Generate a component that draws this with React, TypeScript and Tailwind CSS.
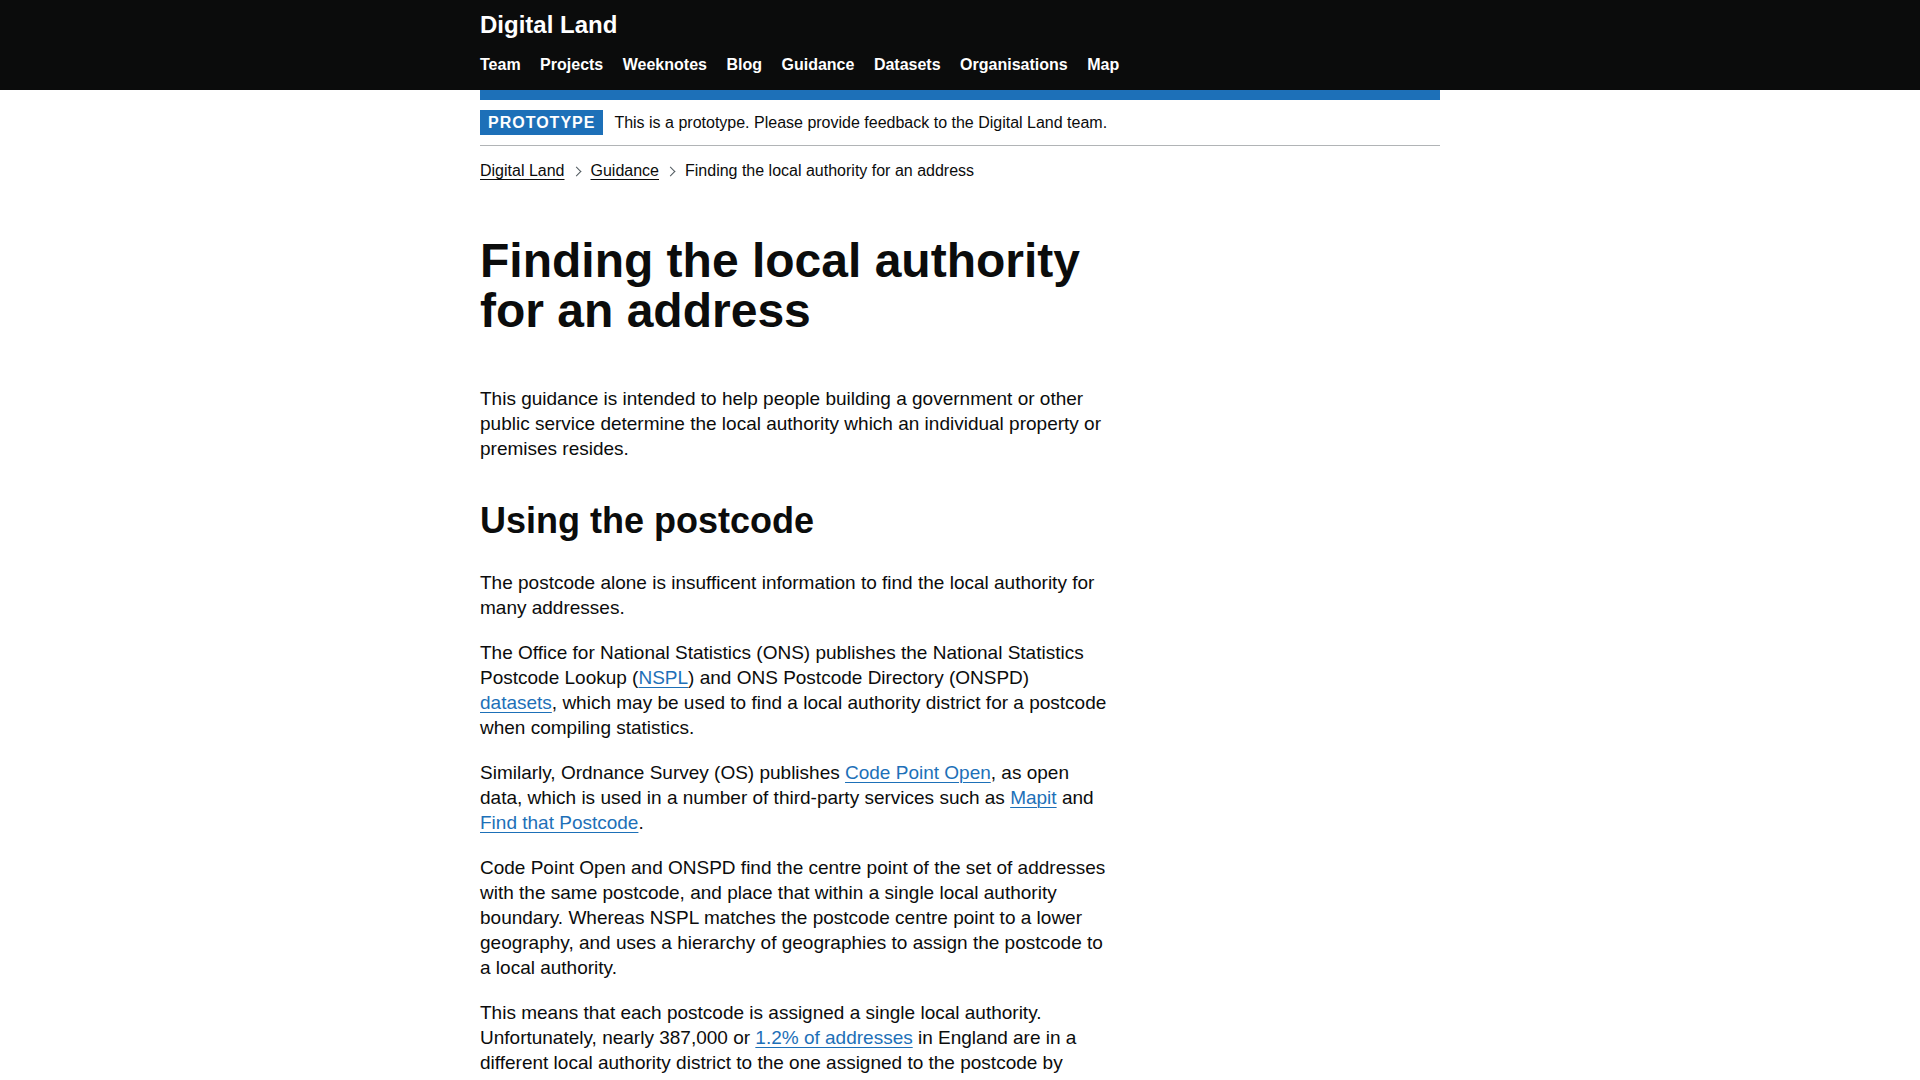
import React from "react";

const navItems = [
  "Team",
  "Projects",
  "Weeknotes",
  "Blog",
  "Guidance",
  "Datasets",
  "Organisations",
  "Map",
];

const Link = ({ children }: { children: React.ReactNode }) => (
  <a
    href="#"
    className="text-[#1d70b8] underline decoration-1 underline-offset-[0.1578em]"
  >
    {children}
  </a>
);

const Chevron = () => (
  <span className="ml-[8px] mr-[11px] inline-block h-[7px] w-[7px] rotate-45 border-t border-r border-[#505a5f]" />
);

const App = () => {
  return (
    <div className="min-h-screen bg-white font-['Liberation_Sans',Arial,sans-serif] text-[#0b0c0c]">
      {/* header */}
      <header className="bg-[#0b0c0c] text-white">
        <div className="mx-auto h-[90px] w-[960px] pt-[10px]">
          <a href="#" className="block text-[24px] font-bold leading-[30px]">
            Digital Land
          </a>
          <nav className="mt-[12px] flex gap-[19.5px] text-[16px] font-bold leading-[25px]">
            {navItems.map((item) => (
              <a key={item} href="#">
                {item}
              </a>
            ))}
          </nav>
        </div>
      </header>
      <div className="mx-auto h-[10px] w-[960px] bg-[#1d70b8]" />

      <div className="mx-auto w-[960px]">
        {/* phase banner */}
        <div className="flex items-center border-b border-[#b1b4b6] pt-[10px] pb-[10px]">
          <strong className="mr-[11px] bg-[#1d70b8] px-[8px] pt-[5px] pb-[4px] text-[16px] font-bold uppercase leading-[16px] tracking-[1px] text-white">
            Prototype
          </strong>
          <span className="text-[16px] leading-[20px]">
            This is a prototype. Please provide feedback to the Digital Land
            team.
          </span>
        </div>

        {/* breadcrumbs */}
        <ol className="mt-[15px] mb-[15px] flex items-center text-[16px] leading-[20px]">
          <li className="flex items-center">
            <a href="#" className="underline decoration-1 underline-offset-[0.1578em]">
              Digital Land
            </a>
            <Chevron />
          </li>
          <li className="flex items-center">
            <a href="#" className="underline decoration-1 underline-offset-[0.1578em]">
              Guidance
            </a>
            <Chevron />
          </li>
          <li>Finding the local authority for an address</li>
        </ol>

        <main className="pt-[40px] pb-[60px]">
          <div className="w-[628px]">
            <h1 className="mb-[50px] text-[48px] font-bold leading-[50px]">
              Finding the local authority for an address
            </h1>

            <p className="mb-[20px] text-[19px] leading-[25px]">
              This guidance is intended to help people building a government or
              other public service determine the local authority which an
              individual property or premises resides.
            </p>

            <h2 className="mb-[29px] pt-[20px] text-[36px] font-bold leading-[40px]">
              Using the postcode
            </h2>

            <p className="mb-[20px] text-[19px] leading-[25px]">
              The postcode alone is insufficent information to find the local
              authority for many addresses.
            </p>

            <p className="mb-[20px] text-[19px] leading-[25px]">
              The Office for National Statistics (ONS) publishes the National
              Statistics Postcode Lookup (<Link>NSPL</Link>) and ONS Postcode
              Directory (ONSPD) <Link>datasets</Link>, which may be used to find
              a local authority district for a postcode when compiling
              statistics.
            </p>

            <p className="mb-[20px] text-[19px] leading-[25px]">
              Similarly, Ordnance Survey (OS) publishes{" "}
              <Link>Code Point Open</Link>, as open data, which is used in a
              number of third-party services such as <Link>Mapit</Link> and{" "}
              <Link>Find that Postcode</Link>.
            </p>

            <p className="mb-[20px] text-[19px] leading-[25px]">
              Code Point Open and ONSPD find the centre point of the set of
              addresses with the same postcode, and place that within a single
              local authority boundary. Whereas NSPL matches the postcode centre
              point to a lower geography, and uses a hierarchy of geographies to
              assign the postcode to a local authority.
            </p>

            <p className="mb-[20px] text-[19px] leading-[25px]">
              This means that each postcode is assigned a single local
              authority. Unfortunately, nearly 387,000 or{" "}
              <Link>1.2% of addresses</Link> in England are in a different local
              authority district to the one assigned to the postcode by these
              datasets.
            </p>
          </div>
        </main>
      </div>
    </div>
  );
};

export default App;
